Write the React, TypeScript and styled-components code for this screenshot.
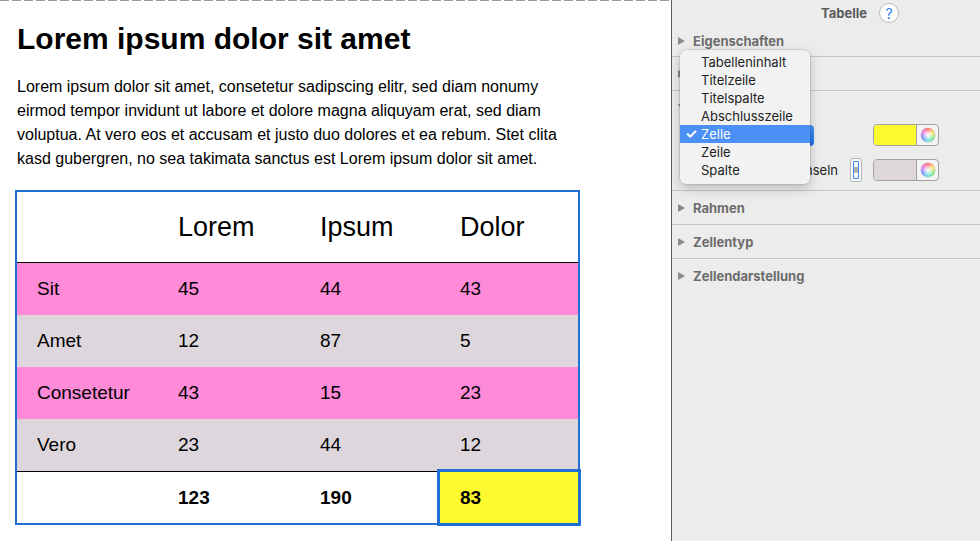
import React from "react";
import styled, { createGlobalStyle } from "styled-components";

const GlobalStyle = createGlobalStyle`
  html, body {
    margin: 0;
    padding: 0;
  }
  body {
    width: 980px;
    height: 541px;
    overflow: hidden;
    background: #fff;
  }
`;

const Screen = styled.div`
  display: flex;
  width: 980px;
  height: 541px;
  overflow: hidden;
`;

/* ---------- document side ---------- */

const Document = styled.main`
  width: 672px;
  flex: none;
  box-sizing: border-box;
  padding: 21px 0 0 17px;
  border-right: 1px solid #5e5e5e;
  background-color: #fff;
  background-image: repeating-linear-gradient(to right, #9d9d9d 0 9px, transparent 9px 12px);
  background-size: 100% 1px;
  background-repeat: no-repeat;
  font-family: "Liberation Sans", Arial, Helvetica, sans-serif;
  color: #000;
`;

const Heading = styled.h1`
  margin: 0;
  font-size: 30px;
  line-height: 36px;
  font-weight: 700;
`;

const Text = styled.p`
  margin: 18px 0 0;
  font-size: 16px;
  line-height: 24px;
  white-space: nowrap;
`;

const Table = styled.div`
  width: 565px;
  box-sizing: border-box;
  margin: 19px 0 0 -2px;
  border: 2px solid #1f6fd5;
`;

const Row = styled.div<{ $bg?: string; $height: number; $line?: "top" | "bottom" }>`
  display: grid;
  grid-template-columns: 141px 142px 140px 1fr;
  height: ${(p) => p.$height}px;
  background: ${(p) => p.$bg || "#fff"};
  border-top: ${(p) => (p.$line === "top" ? "1px solid #000" : "none")};
  border-bottom: ${(p) => (p.$line === "bottom" ? "1px solid #000" : "none")};
`;

const Cell = styled.div<{ $head?: boolean; $bold?: boolean; $selected?: boolean }>`
  display: flex;
  align-items: center;
  padding-left: 20px;
  font-size: ${(p) => (p.$head ? "27px" : "19px")};
  font-weight: ${(p) => (p.$bold ? 700 : 400)};
  background: ${(p) => (p.$selected ? "#fdf92f" : "transparent")};
  outline: ${(p) => (p.$selected ? "3px solid #1f6fd5" : "none")};
  position: ${(p) => (p.$selected ? "relative" : "static")};
  z-index: ${(p) => (p.$selected ? 1 : "auto")};
`;

const PINK = "#fe8ad8";
const GRAY = "#ddd6dd";

const body = [
  { label: "Sit", values: ["45", "44", "43"], bg: PINK },
  { label: "Amet", values: ["12", "87", "5"], bg: GRAY },
  { label: "Consetetur", values: ["43", "15", "23"], bg: PINK },
  { label: "Vero", values: ["23", "44", "12"], bg: GRAY },
];

/* ---------- inspector side ---------- */

const Inspector = styled.aside`
  flex: 1;
  position: relative;
  background: #ececec;
  font-family: Inter, "Liberation Sans", Arial, sans-serif;
  font-size: 13px;
  color: #222;
`;

const TitleBar = styled.div`
  height: 26px;
  display: flex;
  align-items: center;
  justify-content: flex-end;
  gap: 12px;
  padding-right: 81px;
`;

const Title = styled.span`
  font-weight: 700;
  color: #5a5a5a;
`;

const Help = styled.span`
  width: 20px;
  height: 20px;
  box-sizing: border-box;
  border-radius: 50%;
  border: 1px solid #b9b9b9;
  background: #fff;
  color: #2f7ef0;
  display: flex;
  align-items: center;
  justify-content: center;
  font-size: 14px;
`;

const Section = styled.section<{ $last?: boolean }>`
  border-bottom: ${(p) => (p.$last ? "none" : "1px solid #c6c6c6")};
`;

const SectionHeader = styled.div<{ $height?: number }>`
  height: ${(p) => p.$height ?? 33}px;
  display: flex;
  align-items: center;
  gap: 8px;
  padding-left: 6px;
  font-weight: 700;
  color: #6c6c6c;
`;

const SectionBody = styled.div`
  display: flex;
  flex-direction: column;
  gap: 13px;
  padding: 0 41px 9px 18px;
`;

const ControlRow = styled.div`
  display: flex;
  align-items: center;
  height: 22px;
`;

const PopupButton = styled.div`
  width: 124px;
  height: 21px;
  border-radius: 4px;
  background: linear-gradient(#4a97f7, #1d6ee6);
  margin-right: auto;
`;

const RowLabel = styled.span`
  margin-left: auto;
  color: #222;
`;

const Stepper = styled.div`
  width: 12px;
  height: 24px;
  box-sizing: border-box;
  margin-left: 12px;
  padding: 2px;
  border: 1px solid #b3b3b3;
  border-radius: 3px;
  background: #fff;
`;

const StepperInner = styled.div`
  width: 100%;
  height: 100%;
  box-sizing: border-box;
  border: 1px solid #3b8cf3;
  background: linear-gradient(#fff 0 30%, #b2b2b2 30% 70%, #fff 70%);
`;

const ColorWell = styled.div`
  width: 66px;
  height: 22px;
  box-sizing: border-box;
  margin-left: 11px;
  display: flex;
  border: 1px solid #a2a2a2;
  border-radius: 4px;
  overflow: hidden;
  background: #f4f4f4;
`;

const Swatch = styled.div<{ $color: string }>`
  flex: 1;
  background: ${(p) => p.$color};
  border-right: 1px solid #a2a2a2;
`;

const WheelBox = styled.div`
  width: 21px;
  display: flex;
  align-items: center;
  justify-content: center;
`;

const Wheel = styled.div`
  width: 14px;
  height: 14px;
  border-radius: 50%;
  background: radial-gradient(circle, #fff 0%, rgba(255, 255, 255, 0.6) 35%, rgba(255, 255, 255, 0) 75%),
    conic-gradient(#ff4d4d, #ffd84d, #6be36b, #4de0e0, #5a7bff, #e35ae3, #ff4d4d);
  box-shadow: 0 0 0 0.5px rgba(0, 0, 0, 0.2);
`;

const Menu = styled.div`
  position: absolute;
  left: 8px;
  top: 50px;
  width: 130px;
  box-sizing: border-box;
  padding: 3px 0 5px;
  border-radius: 6px;
  background: #f2f2f2;
  box-shadow: 0 0 0 0.5px rgba(0, 0, 0, 0.18), 0 4px 12px rgba(0, 0, 0, 0.22);
  z-index: 5;
`;

const MenuItem = styled.div<{ $active?: boolean }>`
  height: 18px;
  line-height: 18px;
  padding-left: 5px;
  display: flex;
  align-items: center;
  background: ${(p) => (p.$active ? "#4a90f6" : "transparent")};
  color: ${(p) => (p.$active ? "#fff" : "#222")};
`;

const Check = styled.span`
  width: 16px;
  flex: none;
  font-size: 14px;
  font-weight: 700;
`;

const Arrow = ({ open }: { open?: boolean }) =>
  open ? (
    <svg width="8" height="7" viewBox="0 0 8 7">
      <polygon points="0,0 8,0 4,7" fill="#8a8a8a" />
    </svg>
  ) : (
    <svg width="7" height="8" viewBox="0 0 7 8">
      <polygon points="0,0 7,4 0,8" fill="#8a8a8a" />
    </svg>
  );

const menuItems = ["Tabelleninhalt", "Titelzeile", "Titelspalte", "Abschlusszeile", "Zelle", "Zeile", "Spalte"];

export default function App() {
  return (
    <Screen>
      <GlobalStyle />
      <Document>
        <Heading>Lorem ipsum dolor sit amet</Heading>
        <Text>
          Lorem ipsum dolor sit amet, consetetur sadipscing elitr, sed diam nonumy
          <br />
          eirmod tempor invidunt ut labore et dolore magna aliquyam erat, sed diam
          <br />
          voluptua. At vero eos et accusam et justo duo dolores et ea rebum. Stet clita
          <br />
          kasd gubergren, no sea takimata sanctus est Lorem ipsum dolor sit amet.
        </Text>
        <Table>
          <Row $height={70} $line="bottom">
            <Cell $head />
            <Cell $head>Lorem</Cell>
            <Cell $head>Ipsum</Cell>
            <Cell $head>Dolor</Cell>
          </Row>
          {body.map((r) => (
            <Row key={r.label} $height={52} $bg={r.bg}>
              <Cell>{r.label}</Cell>
              {r.values.map((v, i) => (
                <Cell key={i}>{v}</Cell>
              ))}
            </Row>
          ))}
          <Row $height={51} $line="top">
            <Cell $bold />
            <Cell $bold>123</Cell>
            <Cell $bold>190</Cell>
            <Cell $bold $selected>
              83
            </Cell>
          </Row>
        </Table>
      </Document>

      <Inspector>
        <TitleBar>
          <Title>Tabelle</Title>
          <Help>?</Help>
        </TitleBar>

        <Section>
          <SectionHeader $height={30}>
            <Arrow />
            Eigenschaften
          </SectionHeader>
        </Section>

        {/* section titles hidden under the open menu */}
        <Section>
          <SectionHeader>
            <Arrow />
          </SectionHeader>
        </Section>

        <Section>
          <SectionHeader>
            <Arrow open />
          </SectionHeader>
          <SectionBody>
            <ControlRow>
              <PopupButton />
              <ColorWell>
                <Swatch $color="#fdf92f" />
                <WheelBox>
                  <Wheel />
                </WheelBox>
              </ColorWell>
            </ControlRow>
            <ControlRow>
              <RowLabel>Abwechseln</RowLabel>
              <Stepper>
                <StepperInner />
              </Stepper>
              <ColorWell>
                <Swatch $color="#ddd6da" />
                <WheelBox>
                  <Wheel />
                </WheelBox>
              </ColorWell>
            </ControlRow>
          </SectionBody>
        </Section>

        <Section>
          <SectionHeader>
            <Arrow />
            Rahmen
          </SectionHeader>
        </Section>

        <Section>
          <SectionHeader>
            <Arrow />
            Zellentyp
          </SectionHeader>
        </Section>

        <Section $last>
          <SectionHeader>
            <Arrow />
            Zellendarstellung
          </SectionHeader>
        </Section>

        <Menu>
          {menuItems.map((item, i) => (
            <MenuItem key={i} $active={i === 4}>
              <Check>{i === 4 ? "✓" : ""}</Check>
              {item}
            </MenuItem>
          ))}
        </Menu>
      </Inspector>
    </Screen>
  );
}
